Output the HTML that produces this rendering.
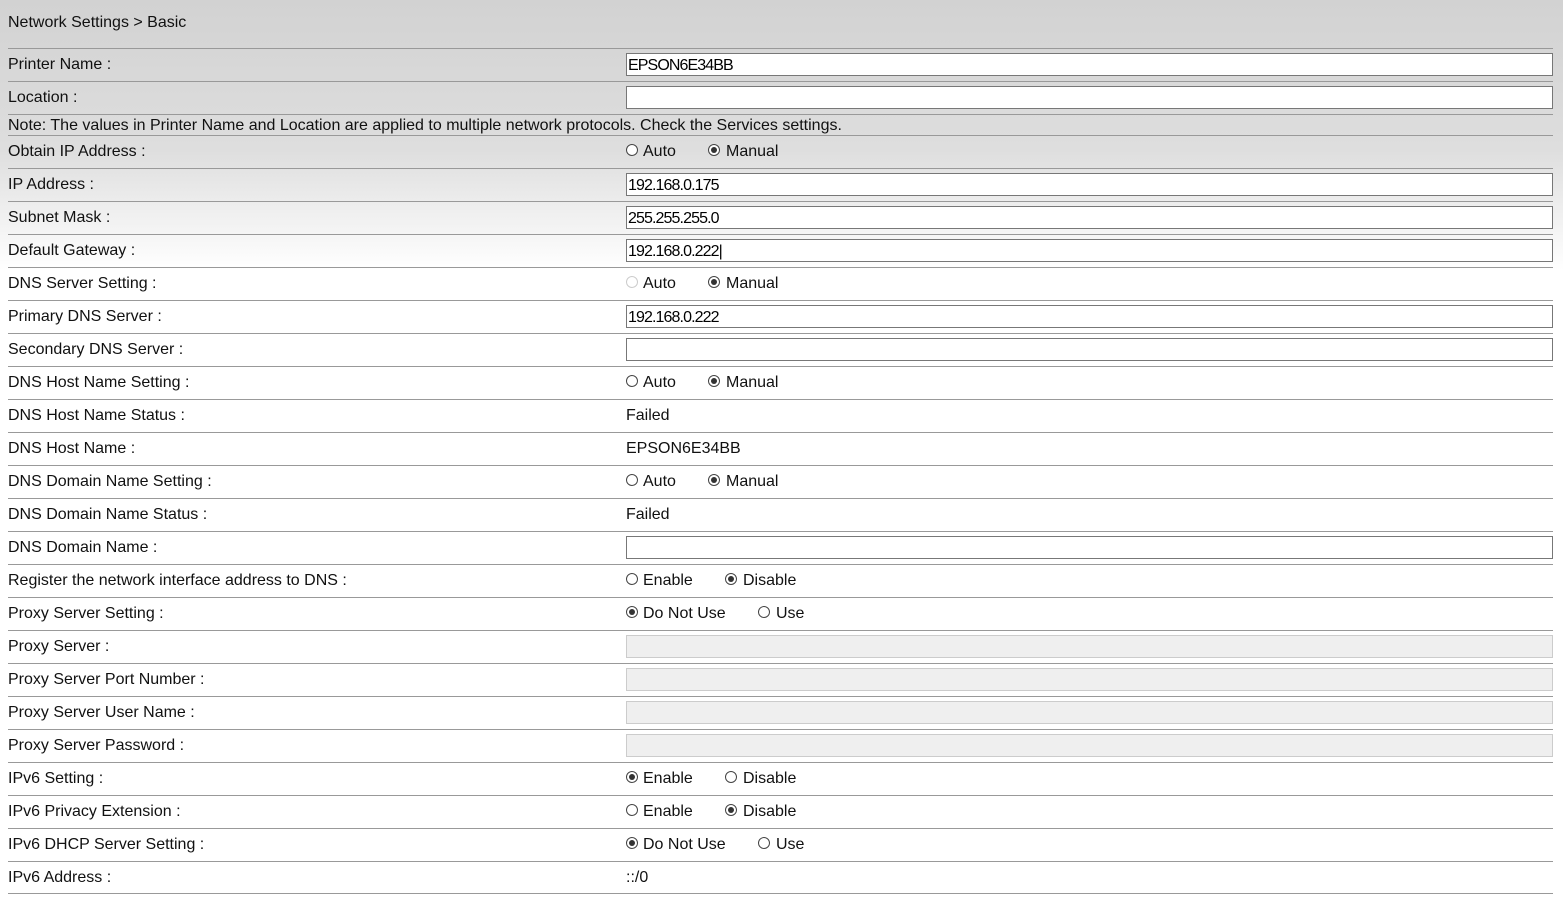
<!DOCTYPE html>
<html><head><style>
html,body{margin:0;padding:0}
body{width:1563px;height:897px;overflow:hidden;font-family:"Liberation Sans",Arial,sans-serif;font-size:16px;color:#111;
background:linear-gradient(#d2d2d2 0px,#dedede 150px,#ffffff 270px,#fff 897px);position:relative}
.t{position:absolute;left:8px;top:14px}
.row{position:absolute;left:8px;width:1545px;height:33px;border-top:1px solid #999;box-sizing:border-box}
.row .l{position:absolute;left:0;top:7px;white-space:nowrap}
.row .v{position:absolute;left:618px;top:7px;white-space:nowrap}
.inp{position:absolute;left:618px;top:4px;width:927px;height:23px;box-sizing:border-box;border:1px solid #777;background:#fff;font-size:16px;padding:3px 0 0 1px;letter-spacing:-0.9px;color:#000}
.inp.d{background:#efefef;border-color:#ccc}
.r{position:absolute;top:8px;width:12px;height:12px;border:1px solid #444;border-radius:50%;box-sizing:border-box;background:#fff}
.r.on::after{content:"";position:absolute;left:2px;top:2px;width:6px;height:6px;border-radius:50%;background:#333}
.r.dis{border-color:#ccc}
.rl{position:absolute;top:7px}
.last{position:absolute;left:8px;top:893px;width:1545px;border-top:1px solid #999}
</style></head><body>
<div class="t">Network Settings &gt; Basic</div>

<div class="row" style="top:48px"><span class="l">Printer Name :</span><div class="inp">EPSON6E34BB</div></div>
<div class="row" style="top:81px"><span class="l">Location :</span><div class="inp"></div></div>
<div class="row" style="top:114px;height:21px"><span class="l" style="top:2px">Note: The values in Printer Name and Location are applied to multiple network protocols. Check the Services settings.</span></div>
<div class="row" style="top:135px"><span class="l">Obtain IP Address :</span><i class="r" style="left:618px"></i><span class="rl" style="left:635px">Auto</span><i class="r on" style="left:700px"></i><span class="rl" style="left:718px">Manual</span></div>
<div class="row" style="top:168px"><span class="l">IP Address :</span><div class="inp">192.168.0.175</div></div>
<div class="row" style="top:201px"><span class="l">Subnet Mask :</span><div class="inp">255.255.255.0</div></div>
<div class="row" style="top:234px"><span class="l">Default Gateway :</span><div class="inp">192.168.0.222|</div></div>
<div class="row" style="top:267px"><span class="l">DNS Server Setting :</span><i class="r dis" style="left:618px"></i><span class="rl" style="left:635px">Auto</span><i class="r on" style="left:700px"></i><span class="rl" style="left:718px">Manual</span></div>
<div class="row" style="top:300px"><span class="l">Primary DNS Server :</span><div class="inp">192.168.0.222</div></div>
<div class="row" style="top:333px"><span class="l">Secondary DNS Server :</span><div class="inp"></div></div>
<div class="row" style="top:366px"><span class="l">DNS Host Name Setting :</span><i class="r" style="left:618px"></i><span class="rl" style="left:635px">Auto</span><i class="r on" style="left:700px"></i><span class="rl" style="left:718px">Manual</span></div>
<div class="row" style="top:399px"><span class="l">DNS Host Name Status :</span><span class="v">Failed</span></div>
<div class="row" style="top:432px"><span class="l">DNS Host Name :</span><span class="v">EPSON6E34BB</span></div>
<div class="row" style="top:465px"><span class="l">DNS Domain Name Setting :</span><i class="r" style="left:618px"></i><span class="rl" style="left:635px">Auto</span><i class="r on" style="left:700px"></i><span class="rl" style="left:718px">Manual</span></div>
<div class="row" style="top:498px"><span class="l">DNS Domain Name Status :</span><span class="v">Failed</span></div>
<div class="row" style="top:531px"><span class="l">DNS Domain Name :</span><div class="inp"></div></div>
<div class="row" style="top:564px"><span class="l">Register the network interface address to DNS :</span><i class="r" style="left:618px"></i><span class="rl" style="left:635px">Enable</span><i class="r on" style="left:717px"></i><span class="rl" style="left:735px">Disable</span></div>
<div class="row" style="top:597px"><span class="l">Proxy Server Setting :</span><i class="r on" style="left:618px"></i><span class="rl" style="left:635px">Do Not Use</span><i class="r" style="left:750px"></i><span class="rl" style="left:768px">Use</span></div>
<div class="row" style="top:630px"><span class="l">Proxy Server :</span><div class="inp d"></div></div>
<div class="row" style="top:663px"><span class="l">Proxy Server Port Number :</span><div class="inp d"></div></div>
<div class="row" style="top:696px"><span class="l">Proxy Server User Name :</span><div class="inp d"></div></div>
<div class="row" style="top:729px"><span class="l">Proxy Server Password :</span><div class="inp d"></div></div>
<div class="row" style="top:762px"><span class="l">IPv6 Setting :</span><i class="r on" style="left:618px"></i><span class="rl" style="left:635px">Enable</span><i class="r" style="left:717px"></i><span class="rl" style="left:735px">Disable</span></div>
<div class="row" style="top:795px"><span class="l">IPv6 Privacy Extension :</span><i class="r" style="left:618px"></i><span class="rl" style="left:635px">Enable</span><i class="r on" style="left:717px"></i><span class="rl" style="left:735px">Disable</span></div>
<div class="row" style="top:828px"><span class="l">IPv6 DHCP Server Setting :</span><i class="r on" style="left:618px"></i><span class="rl" style="left:635px">Do Not Use</span><i class="r" style="left:750px"></i><span class="rl" style="left:768px">Use</span></div>
<div class="row" style="top:861px"><span class="l">IPv6 Address :</span><span class="v">::/0</span></div>
<div class="last"></div>
</body></html>
